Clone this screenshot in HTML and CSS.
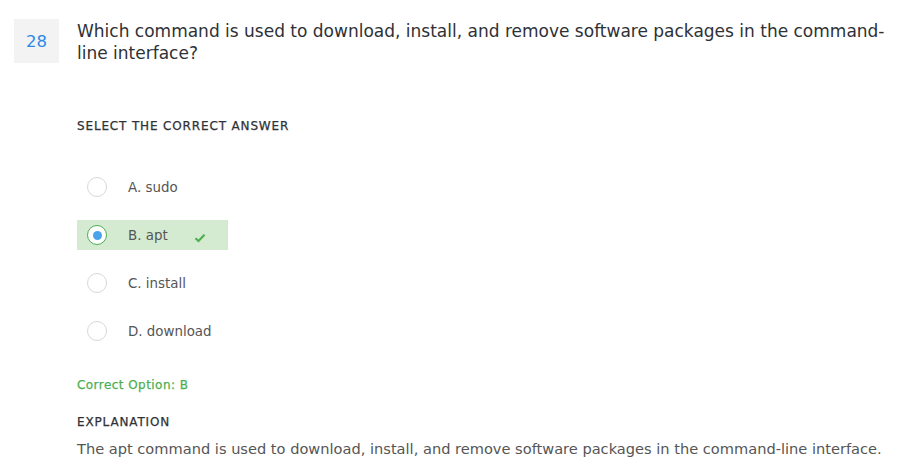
FILE: index.html
```html
<!DOCTYPE html>
<html>
<head>
<meta charset="utf-8">
<link rel="stylesheet" href="styles.css">
</head>
<body>
<div class="question">
  <div class="num">28</div>
  <div class="qtext">Which command is used to download, install, and remove software packages in the command-line interface?</div>
</div>
<div class="body">
  <div class="label">SELECT THE CORRECT ANSWER</div>
  <div class="options">
    <div class="option"><span class="radio"></span><span class="otext">A. sudo</span></div>
    <div class="option correct"><span class="radio checked"><span class="dot"></span></span><span class="otext">B. apt</span>
      <svg class="check" width="12" height="10" viewBox="0 0 12 10"><path d="M1.5 5.2 L4.5 8 L10.5 1.8" fill="none" stroke="#4caf50" stroke-width="2.2"/></svg>
    </div>
    <div class="option"><span class="radio"></span><span class="otext">C. install</span></div>
    <div class="option"><span class="radio"></span><span class="otext">D. download</span></div>
  </div>
  <div class="correct-opt">Correct Option: B</div>
  <div class="label expl-label">EXPLANATION</div>
  <div class="expl">The apt command is used to download, install, and remove software packages in the command-line interface.</div>
</div>
</body>
</html>
```

FILE: styles.css
```css
body {
  margin: 0;
  font-family: "DejaVu Sans", sans-serif;
  color: #333;
  background: #fff;
}
.question {
  display: flex;
  align-items: flex-start;
  padding: 19px 0 0 14px;
}
.num {
  width: 45px;
  height: 44px;
  background: #f3f3f3;
  color: #2a8ae6;
  font-size: 16.5px;
  display: flex;
  align-items: center;
  justify-content: center;
  flex: none;
}
.qtext {
  margin-left: 18px;
  width: 815px;
  font-size: 17px;
  line-height: 22px;
  color: #2e3136;
  padding-top: 1px;
}
.body {
  padding-left: 77px;
}
.label {
  font-size: 12px;
  font-weight: normal;
  color: #2e3136;
  letter-spacing: 0.85px;
  margin-top: 55px;
  line-height: 14px;
  -webkit-text-stroke: 0.25px #2e3136;
}
.options {
  margin-top: 39px;
  display: flex;
  flex-direction: column;
  gap: 18px;
}
.option {
  width: 141px;
  height: 30px;
  padding-left: 10px;
  display: flex;
  align-items: center;
  position: relative;
}
.option.correct {
  background: #d4ead1;
}
.radio {
  width: 18px;
  height: 18px;
  border: 1px solid #d8d8d8;
  border-radius: 50%;
  background: #fff;
  display: flex;
  align-items: center;
  justify-content: center;
  flex: none;
}
.radio.checked {
  border-color: #4caf50;
}
.dot {
  width: 9px;
  height: 9px;
  border-radius: 50%;
  background: #4aa3e8;
}
.otext {
  margin-left: 21px;
  font-size: 13.4px;
  color: #555;
}
.check {
  margin-left: 26px;
  margin-top: 5px;
}
.correct-opt {
  margin-top: 32px;
  font-size: 12px;
  font-weight: normal;
  color: #4caf50;
  line-height: 14px;
  letter-spacing: 0.45px;
  -webkit-text-stroke: 0.25px #4caf50;
}
.expl-label {
  margin-top: 23px;
}
.expl {
  margin-top: 11px;
  font-size: 14.6px;
  color: #555;
  line-height: 18px;
}
```
